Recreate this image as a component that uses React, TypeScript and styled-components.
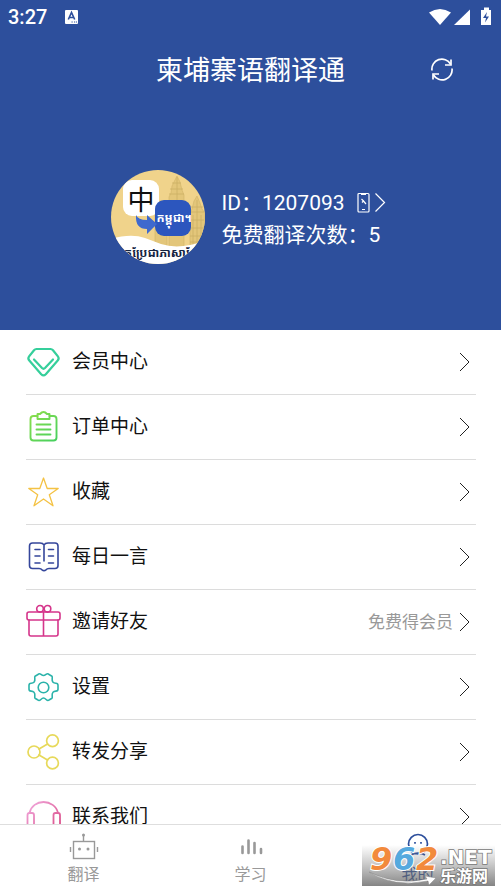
import React from "react";
import styled, { createGlobalStyle } from "styled-components";

const GlobalStyle = createGlobalStyle`
  * { box-sizing: border-box; }
  body {
    margin: 0;
    background: #fff;
    font-family: Roboto, "Noto Sans CJK SC", sans-serif;
    color: #111;
  }
  button { font: inherit; color: inherit; background: none; border: 0; padding: 0; cursor: pointer; }
  svg { display: block; flex: none; }
`;

const Screen = styled.div`
  position: relative;
  display: flex;
  flex-direction: column;
  height: 100vh;
  overflow: hidden;
`;

const Header = styled.header`
  flex: none;
  background: #2d4f9c;
  color: #fff;
  padding-bottom: 66px;
`;

const StatusBar = styled.div`
  display: flex;
  align-items: center;
  height: 34px;
  padding: 0 8px;
  font-size: 20px;
  font-weight: 500;
`;

const StatusIcons = styled.div`
  display: flex;
  margin-left: auto;
`;

const InputBadge = styled.svg`
  margin-left: 18px;
`;

const TitleBar = styled.div`
  display: grid;
  grid-template-columns: 1fr auto 1fr;
  align-items: center;
  height: 72px;
`;

const Title = styled.h1`
  grid-column: 2;
  margin: 0;
  padding-top: 2px;
  font-size: 27px;
  line-height: 40px;
  font-weight: 400;
`;

const RefreshButton = styled.button`
  justify-self: end;
  margin-right: 47px;
`;

const Profile = styled.section`
  display: flex;
  justify-content: center;
  align-items: center;
  gap: 16px;
  margin-top: 64px;
  padding-right: 4px;
`;

const ProfileLines = styled.div`
  display: flex;
  flex-direction: column;
  font-size: 21px;
  line-height: 32px;
  padding-top: 3px;
`;

const AccountButton = styled.button`
  display: flex;
  align-items: center;
`;

const AccountIcon = styled.svg`
  margin-left: 12px;
`;

const Menu = styled.ul`
  flex: 1;
  min-height: 0;
  overflow: hidden;
  list-style: none;
  margin: 0;
  padding: 0 25px 0 26px;
`;

const MenuItem = styled.li`
  border-bottom: 1px solid #dcdcdc;
`;

const MenuButton = styled.button`
  display: flex;
  align-items: center;
  width: 100%;
  height: 64px;
  text-align: left;
`;

const MenuLabel = styled.span`
  flex: 1;
  margin-left: 10px;
  font-size: 19px;
  line-height: 28px;
`;

const MenuNote = styled.span`
  font-size: 17px;
  line-height: 24px;
  color: #999;
  margin-right: 6px;
`;

const MenuArrow = styled.svg`
  margin-right: 6px;
`;

const TabBar = styled.nav`
  flex: none;
  display: grid;
  grid-template-columns: repeat(3, 1fr);
  height: 68px;
  border-top: 1px solid #dedede;
  background: #fff;
`;

const Tab = styled.button<{ $active?: boolean }>`
  display: flex;
  flex-direction: column;
  align-items: center;
  gap: 2px;
  padding-top: 8px;
  font-size: 16px;
  line-height: 24px;
  color: ${(p) => (p.$active ? "#2d4f9c" : "#999")};
`;

const Watermark = styled.svg`
  position: absolute;
  right: 6px;
  bottom: 6px;
`;

const cjk = "'Noto Sans CJK SC', sans-serif";

const Line = ({ stroke, width = 1.5, children }: { stroke: string; width?: number; children: React.ReactNode }) => (
  <svg width="36" height="36" viewBox="0 0 36 36" fill="none" stroke={stroke} strokeWidth={width} strokeLinecap="round" strokeLinejoin="round" aria-hidden="true">
    {children}
  </svg>
);

const DiamondIcon = () => (
  <Line stroke="#35cf9b" width={2.2}>
    <path d="M10.500 5h14q1.500 0 2.500 1.200l4.900 6.200q1.600 2.100-.2 4.100L19.800 30.300q-2.300 2.300-4.600 0L3.300 16.500q-1.800-2-.2-4.100L8 6.200Q9 5 10.500 5z" />
    <path d="M8 15.500l8 8.500q1.500 1.500 3 0l8-8.500" />
  </Line>
);

const ClipboardIcon = () => (
  <svg width="36" height="36" viewBox="0 0 36 36" fill="none" stroke="url(#leaf)" strokeWidth="1.900" strokeLinecap="round" strokeLinejoin="round" aria-hidden="true">
    <defs>
      <linearGradient id="leaf" gradientUnits="userSpaceOnUse" x1="4" y1="4" x2="31" y2="34">
        <stop offset="0" stopColor="#8cde4b" />
        <stop offset="1" stopColor="#42cf60" />
      </linearGradient>
    </defs>
    <path d="M11.500 7H7.500Q4.500 7 4.500 10v18.500q0 3 3 3h20q3 0 3-3V10q0-3-3-3H23.500" />
    <path d="M14 5q3.500-4 7 0h2.500v5H11.500V5z" />
    <path d="M10.500 15.500h14M10.500 20.500h14M10.500 25.500h14" />
  </svg>
);

const StarIcon = () => (
  <Line stroke="#f4c244" width={1.3}>
    <path d="M17.500 4l3.700 10.500h11l-8.900 6.300 3.700 11-9.500-6.800L8 31.800l3.700-11-8.900-6.300h11z" />
  </Line>
);

const BookIcon = () => (
  <Line stroke="#35469b" width={1.6}>
    <path d="M18 22V6q-1-2-4-2H6.500Q3.500 4 3.500 7v19.500q0 3 3 3H13q2 0 3 1.300 2 1.800 4 0 1-1.300 3-1.300h6q3 0 3-3V7q0-3-3-3h-7q-3 0-4 2" />
    <path d="M9 10.500h5M9 17h5M9 24h5M22.500 10.500h5M22.500 17h5M22.500 24h5" />
  </Line>
);

const GiftIcon = () => (
  <Line stroke="#d5358b" width={1.6}>
    <rect x="1" y="8" width="33" height="8" rx="2" />
    <path d="M3 16v14q0 2 2 2h25q2 0 2-2V16M17.500 8v24" />
    <circle cx="14" cy="4.800" r="3.300" />
    <circle cx="21.500" cy="4.800" r="3.300" />
  </Line>
);

const GearIcon = () => (
  <Line stroke="#2bb3aa" width={1.6}>
    <path d="M12 5.500C14 3 15 6.500 17.500 6.500S21 3 23 5.500l3 1.700c1 1-1 4 1 6s5 0 5 3v4c0 3-3 1-5 3s0 5-1 6l-3 1.800c-2 2-3-2-5.500-2s-3.500 4-5.500 2l-3-1.800c-1-1 1-4-1-6s-5 0-5-3v-4c0-3 3-1 5-3s0-5 1-6z" />
    <circle cx="17.500" cy="18.500" r="5.300" />
  </Line>
);

const ShareIcon = () => (
  <Line stroke="#e7d95a" width={1.7}>
    <circle cx="8" cy="18" r="6" />
    <circle cx="26.500" cy="6.800" r="5.900" />
    <circle cx="26.500" cy="29" r="5.900" />
    <path d="M13 15l8.500-5M13 21l8.500 5" />
  </Line>
);

const HeadsetIcon = () => (
  <svg width="36" height="36" viewBox="0 0 36 36" fill="none" stroke="url(#rose)" strokeWidth="1.800" aria-hidden="true">
    <defs>
      <linearGradient id="rose" gradientUnits="userSpaceOnUse" x1="4" y1="4" x2="34" y2="34">
        <stop offset="0" stopColor="#f0a6da" />
        <stop offset="1" stopColor="#d8437f" />
      </linearGradient>
    </defs>
    <path d="M3.500 14C5 7 11 3 17.500 3S30.500 7 32 14" />
    <rect x="1.500" y="14" width="6.500" height="13" rx="2" />
    <rect x="27.500" y="14" width="6.500" height="13" rx="2" />
  </svg>
);

const items: { label: string; Icon: () => React.ReactElement; note?: string }[] = [
  { label: "会员中心", Icon: DiamondIcon },
  { label: "订单中心", Icon: ClipboardIcon },
  { label: "收藏", Icon: StarIcon },
  { label: "每日一言", Icon: BookIcon },
  { label: "邀请好友", Icon: GiftIcon, note: "免费得会员" },
  { label: "设置", Icon: GearIcon },
  { label: "转发分享", Icon: ShareIcon },
  { label: "联系我们", Icon: HeadsetIcon },
];

const Avatar = () => (
  <svg width="94" height="94" viewBox="0 0 94 94" role="img" aria-label="柬埔寨语翻译通">
    <defs>
      <clipPath id="disc"><circle cx="47" cy="47" r="47" /></clipPath>
    </defs>
    <g clipPath="url(#disc)">
      <rect width="94" height="94" fill="#f0d38b" />
      <g fill="#e3c67a" stroke="#d0b368" strokeWidth=".6">
        <path d="M58 78V27l2-4 1-7 3-6 2-4 3 6 2 8 2 5v53z" />
        <path d="M79 78V44l2-5 2-8 3-5 3 7 2 6 3 4v35z" />
        <path d="M44 78V42l3-4 2-5 4 6 3 4v35z" />
      </g>
      <path d="M59 19h13M58 24h15M61 13h9M79 42h14M80 37h12M79 50h14M79 58h14M79 66h14M79 72h14M66 7v24M86 30v46M82 45v30M90 45v30" stroke="#ccb066" strokeWidth=".8" />
      <path d="M0 69q20-6 34-1 8 3 16 6 18 6 44-3v25H0z" fill="#fff" />
      <rect x="12" y="10" width="36" height="36" rx="9" fill="#fff" />
      <rect x="44" y="30" width="36" height="36" rx="9" fill="#2c56be" />
      <path d="M25 45q2 5 11 5v-5l10 9-10 10v-5q-12 0-11-14z" fill="#3e69ce" />
      <text x="30" y="40" textAnchor="middle" fontSize="27" fontWeight="400" fontFamily={cjk} fill="#101010">中</text>
      <text x="63" y="52" textAnchor="middle" fontSize="12" fontWeight="700" fontFamily="'Noto Sans Khmer', sans-serif" fill="#fff">កម្ពុជា។</text>
      <text x="48" y="87" textAnchor="middle" fontSize="12" fontWeight="700" fontFamily="'Noto Sans Khmer', sans-serif" fill="#15233f">បកប្រែជាភាសាខ្មែរ</text>
    </g>
  </svg>
);

export default function App() {
  return (
    <>
      <GlobalStyle />
      <Screen>
        <Header>
          <StatusBar>
            <span>3:27</span>
            <InputBadge width="14" height="16" viewBox="0 0 14 16" aria-hidden="true">
              <rect y="1" width="13" height="14" rx="1" fill="#fff" />
              <path d="M3.300 10.500L6.500 3.500l3.200 7M4.500 8.500h4" stroke="#2d4f9c" strokeWidth="1.600" fill="none" />
              <path d="M6.500 13h1.200M9 13h1.200M11 13h1" stroke="#2d4f9c" strokeWidth="1" />
            </InputBadge>
            <StatusIcons>
              <svg width="64" height="20" viewBox="0 0 64 20" fill="#fff" aria-hidden="true">
                <path d="M0 5.500Q11 -1.500 22 5.500L11 18z" />
                <path d="M25 18L41 2.500V18z" />
                <path d="M52 3h3V0.500h5V3h2v15H52z" />
                <path d="M58 5l-4 6h3l-1 4.500 4-6h-3z" fill="#2d4f9c" />
              </svg>
            </StatusIcons>
          </StatusBar>
          <TitleBar>
            <Title>柬埔寨语翻译通</Title>
            <RefreshButton aria-label="刷新">
              <svg width="24" height="24" viewBox="0 0 24 24" fill="none" stroke="#fff" strokeWidth="1.700">
                <path d="M2 12.500A10 10 0 0 1 20.500 6M22 10.500A10 10 0 0 1 3.500 17" />
                <path d="M21 1.500v5.500h-6M3 21.500v-5.500h6" />
              </svg>
            </RefreshButton>
          </TitleBar>
          <Profile>
            <Avatar />
            <ProfileLines>
              <AccountButton>
                ID：1207093
                <AccountIcon width="29" height="22" viewBox="0 0 29 22" fill="none" stroke="#fff" strokeWidth="1.200" aria-hidden="true">
                  <rect x="1" y="1.500" width="11" height="18.500" rx="1" />
                  <path d="M4 2.500h5M5 17.500h3M4.500 7l2 2M5 10.500l1.500-1.500 2.500 3M18.500 1.500l9 9-9 9" />
                </AccountIcon>
              </AccountButton>
              <span>免费翻译次数：5</span>
            </ProfileLines>
          </Profile>
        </Header>
        <Menu>
          {items.map(({ label, Icon, note }) => (
            <MenuItem key={label}>
              <MenuButton>
                <Icon />
                <MenuLabel>{label}</MenuLabel>
                {note && <MenuNote>{note}</MenuNote>}
                <MenuArrow width="11" height="20" viewBox="0 0 11 20" fill="none" stroke="#222" strokeWidth="1" aria-hidden="true">
                  <path d="M1 1l9 9-9 9" />
                </MenuArrow>
              </MenuButton>
            </MenuItem>
          ))}
        </Menu>
        <TabBar>
          <Tab>
            <svg width="30" height="28" viewBox="0 0 30 28" fill="none" stroke="#999" strokeWidth="1.400" aria-hidden="true">
              <rect x="4.500" y="8.500" width="21" height="17" />
              <path d="M14.500 8V2M1.500 14v5M28.500 14v5" />
              <g fill="#999" stroke="none">
                <circle cx="14.500" cy="2" r="1.500" />
                <circle cx="10.500" cy="16" r="1.500" />
                <circle cx="19" cy="16" r="1.500" />
              </g>
            </svg>
            翻译
          </Tab>
          <Tab>
            <svg width="30" height="28" viewBox="0 0 30 28" stroke="#999" strokeWidth="2.600" strokeLinecap="round" aria-hidden="true">
              <path d="M6.500 13.500v6.500M12.500 7.500V20M18.500 10V20M25 16V20" />
            </svg>
            学习
          </Tab>
          <Tab $active>
            <svg width="30" height="28" viewBox="0 0 30 28" fill="none" stroke="#2d4f9c" strokeWidth="1.700" aria-hidden="true">
              <path d="M8.500 18Q5.500 14 5.500 11a9.500 9.500 0 0 1 19 0q0 3-3 7" />
              <path d="M8 19q7 4 14 0M8 22q7-4 14 0M12 9v1.800M18 9v1.800" />
            </svg>
            我的
          </Tab>
        </TabBar>
        <Watermark width="133" height="41" viewBox="0 0 133 41" role="img" aria-label="962.NET 乐游网">
          <defs>
            <linearGradient id="shade" x1="0" y1="0" x2="0" y2="1">
              <stop offset="0" stopColor="#777" stopOpacity="0" />
              <stop offset="1" stopColor="#666" stopOpacity=".8" />
            </linearGradient>
          </defs>
          <rect width="133" height="41" fill="url(#shade)" />
          <g fontFamily="'DejaVu Sans', sans-serif" fontWeight="700" fontStyle="italic" fontSize="32" stroke="#fff" strokeWidth="2" paintOrder="stroke">
            <text x="8" y="25" fill="#f28a3c">9</text>
            <text x="31" y="25" fill="#55a9de">6</text>
            <text x="54" y="25" fill="#f28a3c">2</text>
          </g>
          <path d="M7 27q28 14 58 7l-2-3 11 2-7 7-1-4Q32 43 7 27z" fill="#fff" stroke="#888" strokeWidth=".5" />
          <g stroke="#777" strokeWidth="1.500" paintOrder="stroke" fill="#fff">
            <text x="78" y="19" fontFamily="'DejaVu Sans', sans-serif" fontWeight="700" fontSize="20">.NET</text>
            <text x="78" y="37" fontFamily={cjk} fontWeight="700" fontSize="16">乐游网</text>
          </g>
        </Watermark>
      </Screen>
    </>
  );
}
